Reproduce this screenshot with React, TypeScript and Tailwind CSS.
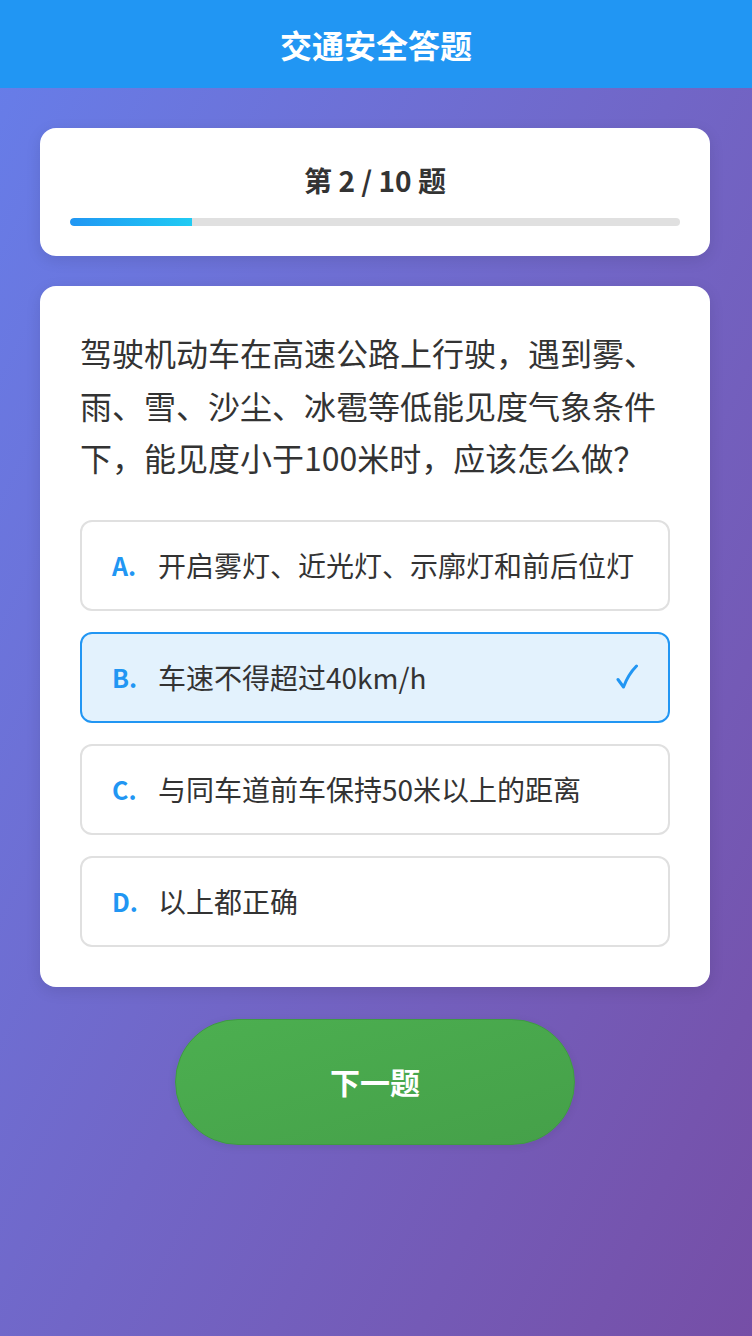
import { useState } from "react";

const options = [
  { key: "A", text: "开启雾灯、近光灯、示廓灯和前后位灯" },
  { key: "B", text: "车速不得超过40km/h" },
  { key: "C", text: "与同车道前车保持50米以上的距离" },
  { key: "D", text: "以上都正确" },
];

export default function App() {
  const [selected, setSelected] = useState("B");
  const current = 2;
  const total = 10;

  return (
    <div className="min-h-screen bg-gradient-to-br from-[#667eea] to-[#764ba2] font-['Noto_Sans_CJK_SC','Noto_Sans',sans-serif] text-[#333]">
      <header className="h-[88px] bg-[#2196F3] flex items-center justify-center">
        <h1 className="text-[32px] font-bold text-white leading-none">交通安全答题</h1>
      </header>

      <main className="w-[750px] min-h-[1437px] px-10 pt-10 flex flex-col">
        <div className="bg-white rounded-2xl shadow-[0_4px_15px_rgba(0,0,0,0.1)] px-[30px] pt-[33px] pb-[30px]">
          <h2 className="text-center text-[28px] font-bold leading-[38px]">
            第 {current} / {total} 题
          </h2>
          <div className="mt-[19px] h-2 rounded-full bg-[#e0e0e0] overflow-hidden">
            <div
              className="h-full rounded-l-full bg-gradient-to-r from-[#2196F3] to-[#21CBF3]"
              style={{ width: `${(current / total) * 100}%` }}
            ></div>
          </div>
        </div>

        <div className="mt-[30px] bg-white rounded-2xl shadow-[0_4px_15px_rgba(0,0,0,0.1)] p-10">
          <p className="text-[32px] leading-[52.5px] mb-[36px]">
            驾驶机动车在高速公路上行驶，遇到雾、雨、雪、沙尘、冰雹等低能见度气象条件下，能见度小于100米时，应该怎么做？
          </p>
          <div className="flex flex-col gap-[21px]">
            {options.map((opt) => {
              const isSel = selected === opt.key;
              return (
                <button
                  key={opt.key}
                  onClick={() => setSelected(opt.key)}
                  className={`flex items-center text-left rounded-xl border-2 px-[30px] py-[22px] ${
                    isSel ? "border-[#2196F3] bg-[#e3f2fd]" : "border-[#e0e0e0] bg-white"
                  }`}
                >
                  <span className="w-[46px] shrink-0 text-[25px] font-bold text-[#2196F3] leading-[43px]">
                    {opt.key}.
                  </span>
                  <span className="flex-1 text-[28px] leading-[43px] text-[#333]">{opt.text}</span>
                  {isSel && (
                    <svg className="w-[22px] h-[26px] shrink-0" viewBox="0 0 22 26" fill="none">
                      <path
                        d="M2 15.5 L7.5 23 C10.5 15 14.5 8 20.5 2"
                        stroke="#2196F3"
                        strokeWidth="3"
                        strokeLinecap="round"
                        strokeLinejoin="round"
                      />
                    </svg>
                  )}
                </button>
              );
            })}
          </div>
        </div>

        <div className="mt-[32px] flex justify-center">
          <button className="w-[400px] h-[126px] rounded-full border border-[#3f9a43] bg-gradient-to-br from-[#4CAF50] to-[#45a049] text-white text-[30px] font-bold shadow-[0_2px_8px_rgba(0,0,0,0.08)]">
            下一题
          </button>
        </div>
      </main>
    </div>
  );
}
